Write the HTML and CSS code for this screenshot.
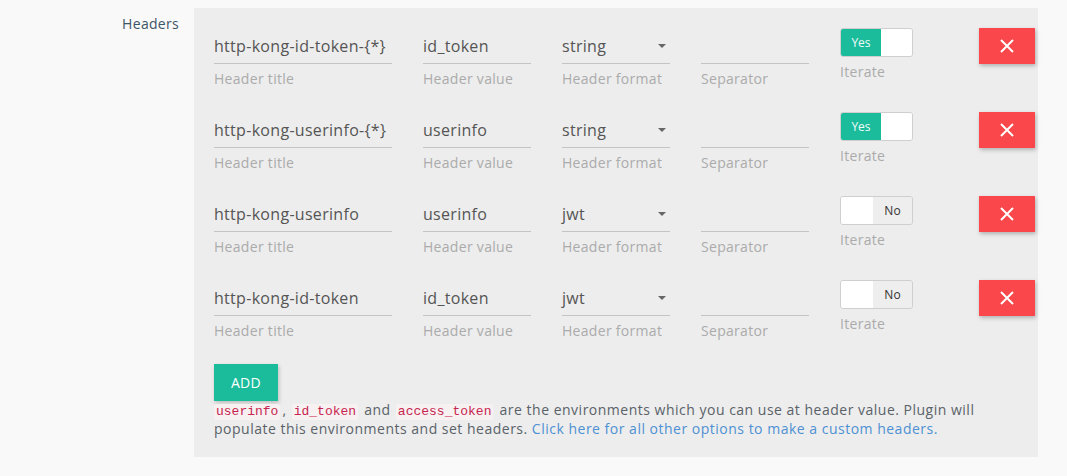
FILE: index.html
```html
<!DOCTYPE html>
<html>
<head>
<meta charset="utf-8">
<link rel="stylesheet" href="styles.css">
</head>
<body>
<div class="page">
  <div class="side-label">Headers</div>
  <div class="panel">
    <div class="row">
      <div class="field wide"><div class="input">http-kong-id-token-{*}</div><div class="hint">Header title</div></div>
      <div class="field"><div class="input">id_token</div><div class="hint">Header value</div></div>
      <div class="field"><div class="input select">string<span class="caret"></span></div><div class="hint">Header format</div></div>
      <div class="field"><div class="input"></div><div class="hint">Separator</div></div>
      <div class="field toggle-field"><div class="toggle on"><span class="t-yes">Yes</span><span class="t-knob"></span></div><div class="hint">Iterate</div></div>
      <button class="del"><svg width="16" height="16" viewBox="0 0 16 16"><path d="M2 2L14 14M14 2L2 14" stroke="#fff" stroke-width="2" fill="none"/></svg></button>
    </div>
    <div class="row">
      <div class="field wide"><div class="input">http-kong-userinfo-{*}</div><div class="hint">Header title</div></div>
      <div class="field"><div class="input">userinfo</div><div class="hint">Header value</div></div>
      <div class="field"><div class="input select">string<span class="caret"></span></div><div class="hint">Header format</div></div>
      <div class="field"><div class="input"></div><div class="hint">Separator</div></div>
      <div class="field toggle-field"><div class="toggle on"><span class="t-yes">Yes</span><span class="t-knob"></span></div><div class="hint">Iterate</div></div>
      <button class="del"><svg width="16" height="16" viewBox="0 0 16 16"><path d="M2 2L14 14M14 2L2 14" stroke="#fff" stroke-width="2" fill="none"/></svg></button>
    </div>
    <div class="row">
      <div class="field wide"><div class="input">http-kong-userinfo</div><div class="hint">Header title</div></div>
      <div class="field"><div class="input">userinfo</div><div class="hint">Header value</div></div>
      <div class="field"><div class="input select">jwt<span class="caret"></span></div><div class="hint">Header format</div></div>
      <div class="field"><div class="input"></div><div class="hint">Separator</div></div>
      <div class="field toggle-field"><div class="toggle off"><span class="t-knob"></span><span class="t-no">No</span></div><div class="hint">Iterate</div></div>
      <button class="del"><svg width="16" height="16" viewBox="0 0 16 16"><path d="M2 2L14 14M14 2L2 14" stroke="#fff" stroke-width="2" fill="none"/></svg></button>
    </div>
    <div class="row">
      <div class="field wide"><div class="input">http-kong-id-token</div><div class="hint">Header title</div></div>
      <div class="field"><div class="input">id_token</div><div class="hint">Header value</div></div>
      <div class="field"><div class="input select">jwt<span class="caret"></span></div><div class="hint">Header format</div></div>
      <div class="field"><div class="input"></div><div class="hint">Separator</div></div>
      <div class="field toggle-field"><div class="toggle off"><span class="t-knob"></span><span class="t-no">No</span></div><div class="hint">Iterate</div></div>
      <button class="del"><svg width="16" height="16" viewBox="0 0 16 16"><path d="M2 2L14 14M14 2L2 14" stroke="#fff" stroke-width="2" fill="none"/></svg></button>
    </div>
    <button class="add">ADD</button>
    <p class="note"><code>userinfo</code>, <code>id_token</code> and <code>access_token</code> are the environments which you can use at header value. Plugin will populate this environments and set headers. <a href="#">Click here for all other options to make a custom headers.</a></p>
  </div>
</div>
</body>
</html>
```

FILE: styles.css
```css
* { box-sizing: border-box; }
body {
  margin: 0;
  background: #f9f9f9;
  font-family: "Open Sans", "Liberation Sans", sans-serif;
  letter-spacing: 0.3px;
}
.page {
  display: flex;
  padding-top: 8px;
}
.side-label {
  width: 194px;
  padding-right: 15px;
  text-align: right;
  font-size: 14px;
  color: #3e5566;
  padding-top: 6px;
  line-height: 20px;
}
.panel {
  width: 844px;
  background: #ededed;
  padding: 20px 20px 19px 20px;
}
.row {
  display: flex;
  gap: 31px;
  margin-bottom: 24px;
  height: 60px;
}
.field {
  width: 108px;
  flex: none;
}
.field.wide { width: 178px; }
.input {
  height: 36px;
  border-bottom: 1px solid #c4c4c4;
  font-size: 16px;
  color: #555;
  padding-top: 2px;
  line-height: 33px;
  white-space: nowrap;
  position: relative;
}
.caret {
  position: absolute;
  right: 4px;
  top: 16px;
  width: 0;
  height: 0;
  border-left: 4px solid transparent;
  border-right: 4px solid transparent;
  border-top: 4px solid #666;
}
.hint {
  margin-top: 5px;
  font-size: 14px;
  line-height: 20px;
  color: #ababab;
}
.toggle {
  width: 73px;
  height: 29px;
  border: 1px solid #cfcfcf;
  border-radius: 3px;
  display: flex;
  overflow: hidden;
  font-size: 12px;
  line-height: 27px;
  letter-spacing: 0;
}
.toggle-field .hint { margin-top: 5px; }
.t-yes {
  width: 40px;
  background: #1abc9c;
  color: #f2fbf9;
  text-align: center;
}
.t-knob {
  flex: 1;
  background: #fff;
}
.toggle.off .t-knob { flex: none; width: 32px; }
.t-no {
  flex: 1;
  background: #eeeeee;
  color: #333;
  text-align: center;
}
.del {
  width: 56px;
  height: 36px;
  background: #f9474b;
  border: none;
  border-radius: 0;
  padding: 0;
  display: flex;
  align-items: center;
  justify-content: center;
  box-shadow: 1px 2px 4px rgba(0,0,0,0.25);
  flex: none;
}
.add {
  display: block;
  height: 37px;
  width: 64px;
  background: #1abc9c;
  color: #fff;
  border: none;
  font-family: inherit;
  font-size: 14px;
  letter-spacing: 0.3px;
  padding: 0;
  box-shadow: 1px 2px 4px rgba(0,0,0,0.2);
}
.note {
  margin: 0;
  font-size: 14px;
  line-height: 18px;
  color: #5a6269;
  letter-spacing: 0.5px;
}
.note code {
  font-family: "Liberation Mono", monospace;
  font-size: 13px;
  line-height: 16px;
  letter-spacing: 0;
  color: #c7254e;
  background: #f7f1f2;
  padding: 0 2px;
  margin: 0 2px 0 1px;
  border-radius: 3px;
  display: inline-block;
}
.note code:first-child { margin-left: 0; }
.note a {
  color: #4e91d3;
  text-decoration: none;
}
```
